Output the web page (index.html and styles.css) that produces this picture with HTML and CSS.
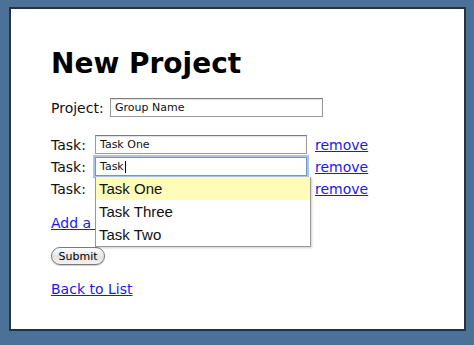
FILE: index.html
```html
<!DOCTYPE html>
<html lang="en">
<head>
  <meta charset="UTF-8">
  <title>New Project</title>
  <link rel="stylesheet" href="styles.css">
</head>
<body>
  <div class="panel">
    <h1>New Project</h1>

    <form class="project-form">
      <div class="row project-row">
        <label for="projectName">Project:</label>
        <input type="text" id="projectName" class="field project-field" value="Group Name">
      </div>

      <div class="tasks">
        <div class="row task-row">
          <label>Task:</label>
          <input type="text" class="field" value="Task One">
          <a href="#" class="remove">remove</a>
        </div>
        <div class="row task-row">
          <label>Task:</label>
          <div class="field-wrap">
            <div class="field focused">Task<span class="caret"></span></div>
            <ul class="suggestions">
              <li class="selected">Task One</li>
              <li>Task Three</li>
              <li>Task Two</li>
            </ul>
          </div>
          <a href="#" class="remove">remove</a>
        </div>
        <div class="row task-row">
          <label>Task:</label>
          <input type="text" class="field" value="">
          <a href="#" class="remove">remove</a>
        </div>
      </div>

      <a href="#" class="add-task">Add a task</a>

      <button type="button" class="submit">Submit</button>
    </form>

    <a href="#" class="back">Back to List</a>
  </div>
</body>
</html>
```

FILE: styles.css
```css
body {
  margin: 0;
  padding: 7px 8px 14px 9px;
  background-color: #4b7199; /* niebieskie tło */
  font-family: "DejaVu Sans", Verdana, sans-serif;
  color: #111;
}
.panel {
  height: 324px;
  box-sizing: border-box;
  background: #fff;
  border: 2px solid #26323f;
  padding: 38px 40px 0 40px;
}
h1 {
  margin: 0;
  font-size: 28px;
  line-height: 33px;
  font-weight: bold;
  color: #000;
}
.row {
  display: flex;
  align-items: center;
  font-size: 14px;
}
.project-row {
  margin-top: 18px;
}
.project-row label {
  width: 59px;
}
.tasks {
  margin-top: 18px;
  display: flex;
  flex-direction: column;
  gap: 3px;
}
.task-row label {
  width: 44px;
}
.field {
  box-sizing: border-box;
  width: 212px;
  height: 19px;
  padding: 0 4px;
  font-family: "DejaVu Sans", Verdana, sans-serif;
  font-size: 11px;
  color: #111;
  border: 1px solid #9a9a9a;
  border-top-color: #7c7c7c;
  border-radius: 0;
  background: #fff;
  box-shadow: inset 0 1px 1px rgba(0, 0, 0, 0.12);
  outline: none;
}
.project-field {
  width: 213px;
}
.field-wrap {
  position: relative;
}
.focused {
  display: flex;
  align-items: center;
  border: 1px solid #6f98c8;
  box-shadow: 0 0 0 2px #a9c6e8;
}
.caret {
  display: inline-block;
  width: 1px;
  height: 12px;
  background: #000;
  margin-left: 1px;
}
.suggestions {
  position: absolute;
  top: 20px;
  left: 0;
  width: 214px;
  margin: 0;
  padding: 0;
  list-style: none;
  background: #fff;
  border: 1px solid #999;
  border-top: none;
  box-shadow: 1px 1px 2px rgba(0, 0, 0, 0.2);
  font-family: "Liberation Sans", Arial, sans-serif;
  font-size: 15px;
  z-index: 2;
}
.suggestions li {
  height: 23px;
  line-height: 23px;
  padding-left: 3px;
  color: #111;
}
.suggestions .selected {
  background: #fffbb9;
}
a {
  color: #1a1ae6;
  text-decoration: underline;
}
.remove {
  margin-left: 8px;
}
.add-task {
  display: block;
  width: max-content;
  margin-top: 17px;
  font-size: 14px;
}
.submit {
  display: block;
  margin-top: 16px;
  width: 54px;
  height: 18px;
  padding: 0;
  font-family: "DejaVu Sans", Verdana, sans-serif;
  font-size: 11px;
  color: #000;
  border: 1px solid #7a7a7a;
  border-radius: 9px;
  background: linear-gradient(#ffffff, #e4e4e4 55%, #f2f2f2);
  box-shadow: 0 1px 1px rgba(0, 0, 0, 0.2);
}
.back {
  display: block;
  width: max-content;
  margin-top: 16px;
  font-size: 14px;
}
```
